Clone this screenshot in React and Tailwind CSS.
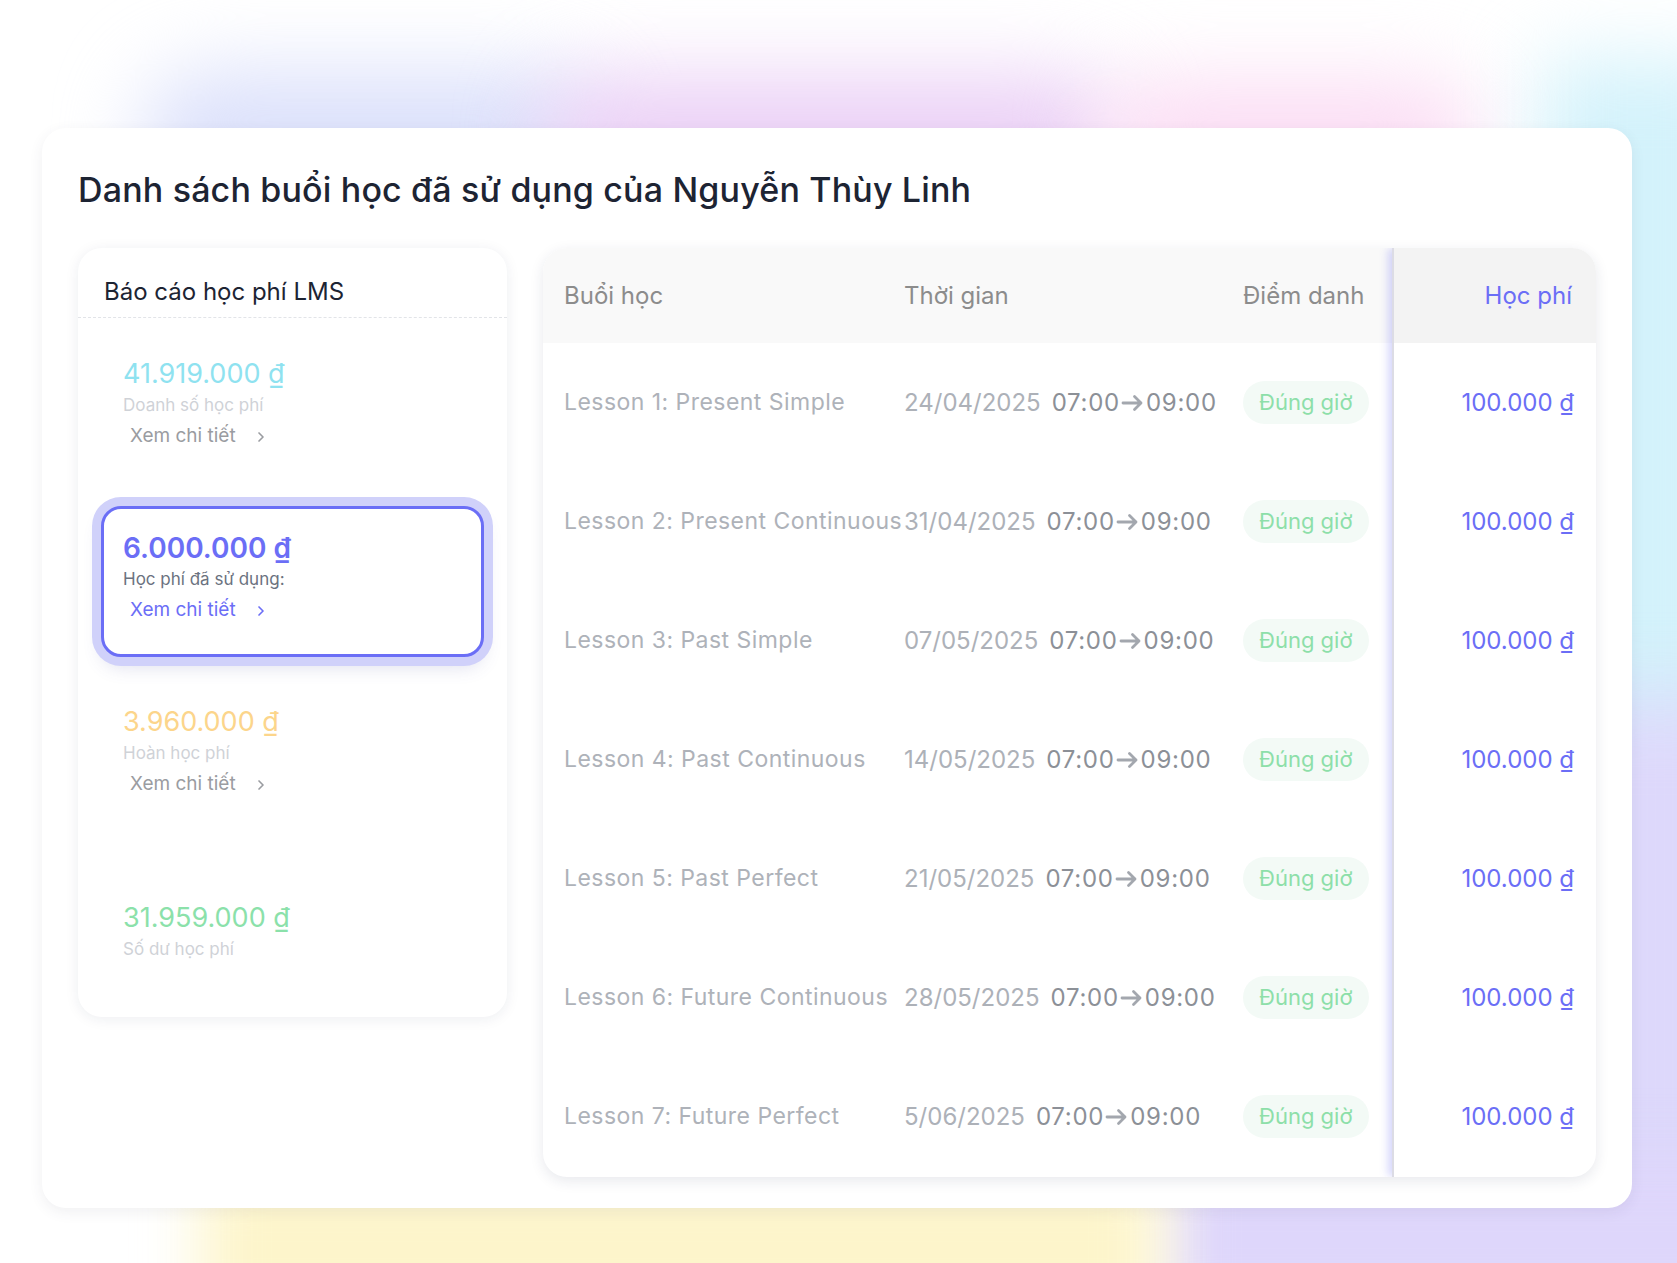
import React from 'react';
import { ChevronRight } from 'lucide-react';

const summary = [
    { amount: '41.919.000 ₫', label: 'Doanh số học phí', amountColor: 'text-[#8fe2f0]', link: true },
    { amount: '6.000.000 ₫', label: 'Học phí đã sử dụng:', amountColor: 'text-[#6b6ef6]', link: true, active: true },
    { amount: '3.960.000 ₫', label: 'Hoàn học phí', amountColor: 'text-[#fcd58b]', link: true },
    { amount: '31.959.000 ₫', label: 'Số dư học phí', amountColor: 'text-[#8be1aa]', link: false },
];

const lessons = [
    { name: 'Lesson 1: Present Simple', date: '24/04/2025' },
    { name: 'Lesson 2: Present Continuous', date: '31/04/2025' },
    { name: 'Lesson 3: Past Simple', date: '07/05/2025' },
    { name: 'Lesson 4: Past Continuous', date: '14/05/2025' },
    { name: 'Lesson 5: Past Perfect', date: '21/05/2025' },
    { name: 'Lesson 6: Future Continuous', date: '28/05/2025' },
    { name: 'Lesson 7: Future Perfect', date: '5/06/2025' },
];

const Arrow = () => (
    <svg width="24" height="22" viewBox="0 0 24 22" fill="none" className="mx-[1px] text-[#a3a7ae]">
        <path d="M2 11h18M13.5 4.5 20 11l-6.5 6.5" stroke="currentColor" strokeWidth="2.8" strokeLinecap="round" strokeLinejoin="round" />
    </svg>
);

const SummaryItem = ({ item, extraTop }) => (
    <div
        className={`h-[151px] rounded-[20px] border-[3px] pt-[22px] pl-[19px] ${extraTop ? 'mt-[22px]' : ''} ${item.active
            ? 'border-[#6b6ef6] bg-white shadow-[0_0_0_9px_#d0d1fa,0_10px_18px_rgba(80,84,160,0.18)]'
            : 'border-transparent'
            }`}
    >
        <div className={`leading-[34px] ${item.active ? 'text-[28px] font-semibold' : 'text-[27px] font-normal'} ${item.amountColor}`}>
            {item.amount}
        </div>
        <div className={`mt-[4px] text-[17px] leading-[20px] ${item.active ? 'text-[#6b7280]' : 'text-[#cfd2d7]'}`}>
            {item.label}
        </div>
        {item.link && (
            <div className={`mt-[9px] ml-[7px] flex items-center text-[19px] leading-[24px] ${item.active ? 'text-[#6b6ef6]' : 'text-[#9a9ca1]'}`}>
                <span>Xem chi tiết</span>
                <ChevronRight size={16} strokeWidth={2.5} className="ml-[17px] mt-[2px]" />
            </div>
        )}
    </div>
);

export default function App() {
    return (
        <div className="relative w-full h-[1263px] overflow-hidden bg-white font-['Inter',sans-serif]">
            {/* background blobs */}
            <div className="absolute left-[140px] top-[70px] w-[460px] h-[140px] rounded-full bg-[#dce1fb] blur-[40px]" />
            <div className="absolute left-[540px] top-[75px] w-[580px] h-[130px] rounded-full bg-[#ebd1f6] blur-[40px]" />
            <div className="absolute left-[1100px] top-[80px] w-[380px] h-[120px] rounded-full bg-[#fbddf4] blur-[40px]" />
            <div className="absolute left-[1540px] top-[60px] w-[200px] h-[720px] bg-[#d3f2fb] blur-[40px]" />
            <div className="absolute left-[1560px] top-[700px] w-[200px] h-[600px] bg-[#ddd8fb] blur-[40px]" />
            <div className="absolute left-[1170px] top-[1160px] w-[600px] h-[160px] bg-[#ded6fb] blur-[30px]" />
            <div className="absolute left-[200px] top-[1170px] w-[960px] h-[160px] bg-[#fdf5cb] blur-[30px]" />

            <div className="relative ml-[42px] mt-[128px] w-[1590px] h-[1080px] rounded-[24px] bg-white px-[36px] pt-[42px] shadow-[0_4px_14px_rgba(60,60,90,0.08)]">
                <h1 className="text-[34px] leading-[40px] font-medium text-[#1d2433] tracking-[0.005em]">
                    Danh sách buổi học đã sử dụng của Nguyễn Thùy Linh
                </h1>

                <div className="mt-[38px] flex gap-[36px]">
                    {/* left summary panel */}
                    <div className="w-[429px] h-[769px] shrink-0 rounded-[24px] bg-white shadow-[0_2px_14px_rgba(30,40,80,0.08)]">
                        <div className="px-[26px] pt-[28px] pb-[9px] border-b border-dashed border-[#e2e4e8] text-[24px] leading-[32px] text-[#1d2433]">
                            Báo cáo học phí LMS
                        </div>
                        <div className="px-[23px] pt-[14px] flex flex-col gap-[23px]">
                            {summary.map((item, i) => (
                                <SummaryItem key={i} item={item} extraTop={i === 3} />
                            ))}
                        </div>
                    </div>

                    {/* lesson table */}
                    <div className="w-[1054px] h-[929px] flex rounded-[24px] overflow-hidden bg-white shadow-[0_4px_14px_rgba(30,40,80,0.1)]">
                        <div className="w-[849px]">
                            <div className="h-[95px] flex items-center bg-[#f9f9f9] text-[24px] text-[#8c8c8c]">
                                <div className="w-[361px] pl-[21px]">Buổi học</div>
                                <div className="w-[339px]">Thời gian</div>
                                <div className="flex-1">Điểm danh</div>
                            </div>
                            {lessons.map((l, i) => (
                                <div key={i} className="h-[119px] flex items-center">
                                    <div className="w-[361px] pl-[21px] whitespace-nowrap text-[23px] tracking-[0.02em] text-[#aeb2b9]">{l.name}</div>
                                    <div className="w-[339px] flex items-center whitespace-nowrap text-[24px]">
                                        <span className="text-[#adb1b8]">{l.date}</span>
                                        <span className="ml-[11px] tracking-[0.03em] text-[#8c9097]">07:00</span>
                                        <Arrow />
                                        <span className="tracking-[0.03em] text-[#8c9097]">09:00</span>
                                    </div>
                                    <div className="flex-1">
                                        <span className="inline-flex h-[43px] items-center rounded-full bg-[#f3faf6] px-[16px] text-[22px] text-[#8ddfa9]">
                                            Đúng giờ
                                        </span>
                                    </div>
                                </div>
                            ))}
                        </div>
                        <div className="flex-1 border-l-2 border-[#dcdce5] shadow-[-5px_0_8px_-1px_rgba(107,110,246,0.28)]">
                            <div className="h-[95px] flex items-center justify-end pr-[24px] bg-[#f3f3f3] text-[24px] text-[#6b6ef6]">
                                Học phí
                            </div>
                            {lessons.map((l, i) => (
                                <div key={i} className="h-[119px] flex items-center justify-end pr-[22px] text-[24px] text-[#6b6ef6]">
                                    100.000 ₫
                                </div>
                            ))}
                        </div>
                    </div>
                </div>
            </div>
        </div>
    );
}
